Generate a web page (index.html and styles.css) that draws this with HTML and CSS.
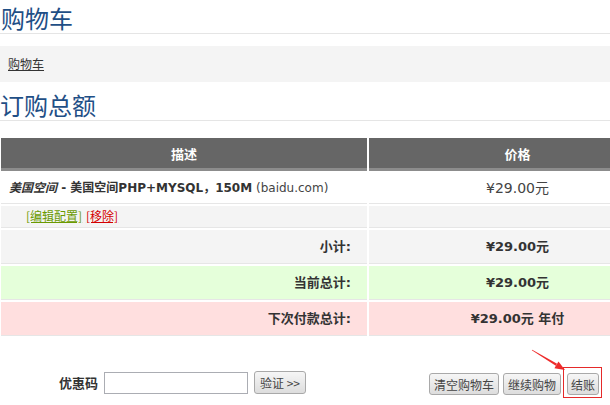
FILE: index.html
```html
<!DOCTYPE html>
<html lang="zh-CN">
<head>
    <meta charset="UTF-8">
    <meta name="viewport" content="width=device-width, initial-scale=1.0">
    <title>购物车</title>
    <link rel="stylesheet" href="styles.css">
</head>
<body>
<div class="page">
    <div class="page-title">购物车</div>

    <div class="breadcrumb"><a href="#">购物车</a></div>

    <div class="sub-title">订购总额</div>

    <table class="cart">
        <tr>
            <th class="col-desc">描述</th>
            <th class="col-price">价格</th>
        </tr>
        <tr class="row-item">
            <td class="desc"><strong><em>美国空间</em> - 美国空间PHP+MYSQL，150M</strong> <span class="domain">(baidu.com)</span></td>
            <td class="price">¥29.00元</td>
        </tr>
        <tr class="row-links">
            <td class="links"><a href="#" class="edit">[编辑配置]</a> <a href="#" class="remove">[移除]</a></td>
            <td></td>
        </tr>
        <tr class="row-sum">
            <td class="label">小计:</td>
            <td class="amount">¥29.00元</td>
        </tr>
        <tr class="row-sum row-total">
            <td class="label">当前总计:</td>
            <td class="amount">¥29.00元</td>
        </tr>
        <tr class="row-sum row-next">
            <td class="label">下次付款总计:</td>
            <td class="amount">¥29.00元 年付</td>
        </tr>
    </table>

    <div class="actions">
        <div class="promo">
            <span class="promo-label">优惠码</span>
            <input type="text" class="promo-input">
            <button class="btn">验证 &gt;&gt;</button>
        </div>
        <div class="cart-buttons">
            <button class="btn btn-side">清空购物车</button>
            <button class="btn btn-side">继续购物</button>
            <span class="highlight"><button class="btn">结账</button></span>
        </div>
    </div>

    <svg class="arrow" width="610" height="405" viewBox="0 0 610 405">
        <polygon points="531.8,350.3 532.2,349.7 557.1,363.8 555.8,365.8" fill="#ee2b2b"/>
        <polygon points="565,370 554.4,368.2 558.5,361.4" fill="#ee2b2b"/>
    </svg>
</div>
</body>
</html>
```

FILE: styles.css
```css
html {
    overflow-x: hidden;
}
body {
    margin: 0;
    background: #fff;
    color: #333;
    font-family: "DejaVu Sans", "Noto Sans CJK SC", sans-serif;
    font-size: 12px;
}
.page {
    position: relative;
    width: 610px;
    height: 405px;
}
.page-title {
    height: 33px;
    font-family: "Noto Sans CJK SC", sans-serif;
    font-size: 24px;
    line-height: 35px;
    color: #1f4f86;
    padding-left: 1px;
    border-bottom: 1px solid #e5e5e5;
}
.breadcrumb {
    margin-top: 12px;
    height: 36px;
    line-height: 36px;
    padding: 0 8px;
    background: #f4f4f4;
    font-family: "Noto Sans CJK SC", sans-serif;
}
.breadcrumb a {
    color: #333;
}
.sub-title {
    margin-top: 8px;
    font-family: "Noto Sans CJK SC", sans-serif;
    font-size: 24px;
    line-height: 30px;
    color: #1f4f86;
    border-bottom: 1px solid #e5e5e5;
}
.cart {
    margin-top: 15px;
    margin-left: -1px;
    width: 669px;
    border-collapse: separate;
    border-spacing: 2px;
    table-layout: fixed;
}
.cart th {
    height: 30px;
    padding: 0;
    background: #666;
    border-bottom: 3px solid #8c8c8c;
    color: #fff;
    font-size: 13px;
    font-weight: bold;
    text-align: center;
}
.col-desc {
    width: 366px;
}
.cart td {
    padding: 0 8px;
    border-bottom: 1px solid #e6e6e6;
}
.row-item td {
    height: 30px;
    line-height: 30px;
}
.desc {
    color: #333;
}
.domain {
    color: #444;
}
.price {
    text-align: center;
    font-size: 14px;
    color: #444;
}
.row-links td {
    height: 20px;
    line-height: 20px;
    background: #f4f4f4;
}
.links {
    padding-left: 25px !important;
}
.links a {
    font-family: "Noto Sans CJK SC", sans-serif;
}
.edit {
    color: #6b9a00;
}
.remove {
    color: #d40000;
}
.row-sum td {
    height: 33px;
    line-height: 33px;
    background: #f4f4f4;
    font-size: 13px;
    font-weight: bold;
    color: #333;
}
.row-total td {
    background: #e5ffda;
}
.row-next td {
    background: #ffdfdf;
}
.label {
    text-align: right;
    padding-right: 16px !important;
}
.amount {
    text-align: center;
}
.actions {
    display: flex;
    align-items: flex-start;
    margin-top: 29px;
}
.promo {
    display: flex;
    align-items: center;
    gap: 6px;
    margin-left: 59px;
    margin-top: 4px;
}
.promo-label {
    font-size: 13px;
    font-weight: bold;
    font-family: "Noto Sans CJK SC", sans-serif;
}
.promo-input {
    width: 144px;
    height: 22px;
    box-sizing: border-box;
    border: 1px solid #abadb3;
    margin: 0;
    padding: 0 3px;
}
.btn {
    height: 23px;
    box-sizing: border-box;
    margin: 0;
    padding: 0 5px;
    border: 1px solid #a9a9a9;
    border-radius: 3px;
    background: linear-gradient(#f6f6f6, #dddddd);
    color: #444;
    font-family: "Noto Sans CJK SC", sans-serif;
    font-size: 12px;
}
.cart-buttons {
    display: flex;
    align-items: flex-start;
    margin-left: auto;
    margin-right: 8px;
    gap: 4px;
}
.btn-side {
    margin-top: 6px;
    height: 22px;
    padding: 0 4px;
}
.highlight {
    display: flex;
    margin: 1px 1px 0 -1px;
    padding: 5px 2px 2px 3px;
    outline: 1px solid #e52a2a;
}
.highlight .btn {
    height: 22px;
    padding: 0 3px;
}
.arrow {
    position: absolute;
    left: 0;
    top: 0;
    pointer-events: none;
}
```
